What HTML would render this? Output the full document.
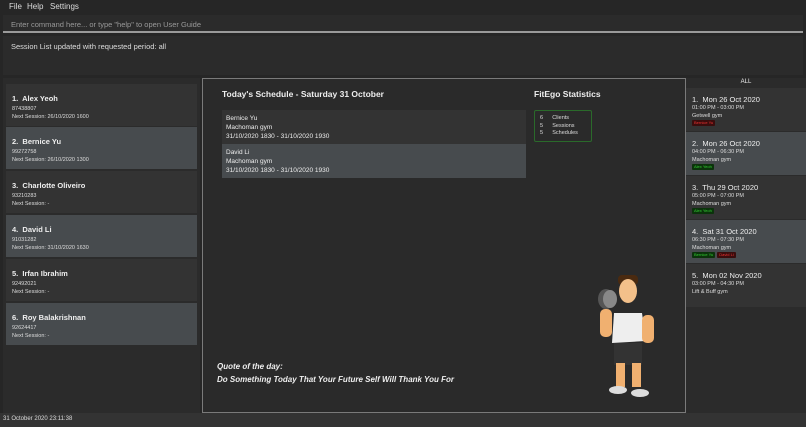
<!DOCTYPE html>
<html><head><meta charset="utf-8"><style>
*{margin:0;padding:0;box-sizing:border-box}
body{width:806px;height:427px;background:#262626;font-family:"Liberation Sans",sans-serif;color:#ddd;position:relative;overflow:hidden;font-size:7px}
.a{position:absolute}
.menu{left:0;top:0;width:806px;height:14px;background:#262626;font-size:8px;color:#ddd}
.menu span{position:absolute;top:2px}
.cmd{left:3px;top:15px;width:800px;height:18px;background:#2b2b2b;border-bottom:2px solid #9a9a9a;color:#999;font-size:7.5px;padding:5px 8px}
.res{left:3px;top:36px;width:800px;height:39px;background:#2b2b2b;font-size:7.5px;padding:6px 8px}
.card{position:absolute;left:6px;width:191px;height:42px;padding:10px 6px}
.card b{font-size:7.5px;font-weight:bold;color:#eee;display:block;margin-bottom:2px}
.card div{font-size:5.5px;color:#ddd;line-height:8px}
.d{background:#333}
.l{background:#474b4e}
.center{left:202px;top:78px;width:484px;height:335px;border:1px solid #7a7a7a;background:#2a2a2a}
.sc{position:absolute;left:19px;width:304px;height:34px;padding:4px 4px;font-size:6.5px;line-height:9px;color:#eee}
.rc{position:absolute;left:686px;width:120px;height:43px;padding:6px 6px;font-size:5.5px;line-height:7.5px}
.rc b{font-size:7.5px;font-weight:normal;color:#eee;display:block;line-height:11px}
.tag{display:inline-block;font-size:4px;line-height:6px;padding:0 2px;border-radius:1px;margin-right:2px}
.r{background:#3a0d0d;color:#e33}
.g{background:#0b330b;color:#3c3}
</style></head><body>
<div class="a menu"><span style="left:9px">File</span><span style="left:27px">Help</span><span style="left:50px">Settings</span></div>
<div class="a cmd">Enter command here... or type "help" to open User Guide</div>
<div class="a res">Session List updated with requested period: all</div>
<div class="a" style="left:3px;top:78px;width:197px;height:335px;background:#2b2b2b"></div>
<div class="card d" style="top:84px"><b>1.&nbsp; Alex Yeoh</b><div>87438807<br>Next Session: 26/10/2020 1600</div></div>
<div class="card l" style="top:127px"><b>2.&nbsp; Bernice Yu</b><div>99272758<br>Next Session: 26/10/2020 1300</div></div>
<div class="card d" style="top:171px"><b>3.&nbsp; Charlotte Oliveiro</b><div>93210283<br>Next Session: -</div></div>
<div class="card l" style="top:215px"><b>4.&nbsp; David Li</b><div>91031282<br>Next Session: 31/10/2020 1630</div></div>
<div class="card d" style="top:259px"><b>5.&nbsp; Irfan Ibrahim</b><div>92492021<br>Next Session: -</div></div>
<div class="card l" style="top:303px"><b>6.&nbsp; Roy Balakrishnan</b><div>92624417<br>Next Session: -</div></div>
<div class="a center">
<div class="a" style="left:19px;top:10px;font-size:8.5px;font-weight:bold;color:#eee">Today's Schedule - Saturday 31 October</div>
<div class="a" style="left:331px;top:10px;font-size:8.5px;font-weight:bold;color:#eee">FitEgo Statistics</div>
<div class="sc" style="top:31px;background:#333">Bernice Yu<br>Machoman gym<br>31/10/2020 1830 - 31/10/2020 1930</div>
<div class="sc" style="top:65px;background:#474b4e">David Li<br>Machoman gym<br>31/10/2020 1830 - 31/10/2020 1930</div>
<div class="a" style="left:331px;top:31px;width:58px;height:32px;border:1px solid #2a6a2a;border-radius:2px;padding:4px 5px;font-size:5.5px;line-height:7.5px;color:#ddd">6&nbsp;&nbsp;&nbsp;&nbsp;&nbsp;&nbsp;Clients<br>5&nbsp;&nbsp;&nbsp;&nbsp;&nbsp;&nbsp;Sessions<br>5&nbsp;&nbsp;&nbsp;&nbsp;&nbsp;&nbsp;Schedules</div>
<div class="a" style="left:14px;top:281px;font-size:8px;font-weight:bold;font-style:italic;color:#eee;line-height:13px">Quote of the day:<br>Do Something Today That Your Future Self Will Thank You For</div>
<svg class="a" style="left:385px;top:192px" width="80" height="130" viewBox="0 0 80 130">
<ellipse cx="18" cy="28" rx="8" ry="10" fill="#555"/><ellipse cx="22" cy="28" rx="7" ry="9" fill="#888"/>
<rect x="12" y="38" width="12" height="28" rx="5" fill="#f0b070"/>
<rect x="30" y="4" width="20" height="10" rx="4" fill="#4a2a10"/>
<ellipse cx="40" cy="20" rx="9" ry="12" fill="#f3c08a"/>
<path d="M26 42 L54 42 L58 70 L24 72 Z" fill="#eee"/>
<rect x="54" y="44" width="12" height="28" rx="5" fill="#f0b070"/>
<rect x="26" y="72" width="28" height="22" fill="#333"/>
<rect x="28" y="92" width="9" height="24" fill="#f0b070"/><rect x="44" y="92" width="9" height="24" fill="#f0b070"/>
<ellipse cx="30" cy="119" rx="9" ry="4" fill="#ddd"/><ellipse cx="52" cy="122" rx="9" ry="4" fill="#ddd"/>
</svg>
</div>
<div class="a" style="left:686px;top:78px;width:120px;height:335px;background:#2b2b2b"></div>
<div class="a" style="left:686px;top:79px;width:120px;text-align:center;font-size:6px;color:#eee">ALL</div>
<div class="rc d" style="top:88px"><b>1.&nbsp; Mon 26 Oct 2020</b>01:00 PM - 03:00 PM<br>Getwell gym<br><span class="tag r">Bernice Yu</span></div>
<div class="rc l" style="top:132px"><b>2.&nbsp; Mon 26 Oct 2020</b>04:00 PM - 06:30 PM<br>Machoman gym<br><span class="tag g">Alex Yeoh</span></div>
<div class="rc d" style="top:176px"><b>3.&nbsp; Thu 29 Oct 2020</b>05:00 PM - 07:00 PM<br>Machoman gym<br><span class="tag g">Alex Yeoh</span></div>
<div class="rc l" style="top:220px"><b>4.&nbsp; Sat 31 Oct 2020</b>06:30 PM - 07:30 PM<br>Machoman gym<br><span class="tag g">Bernice Yu</span><span class="tag r">David Li</span></div>
<div class="rc d" style="top:264px"><b>5.&nbsp; Mon 02 Nov 2020</b>03:00 PM - 04:30 PM<br>Lift &amp; Buff gym</div>
<div class="a" style="left:0;top:413px;width:806px;height:14px;background:#333;font-size:6px;padding:3px 3px;color:#ddd">31 October 2020 23:11:38</div>
</body></html>
